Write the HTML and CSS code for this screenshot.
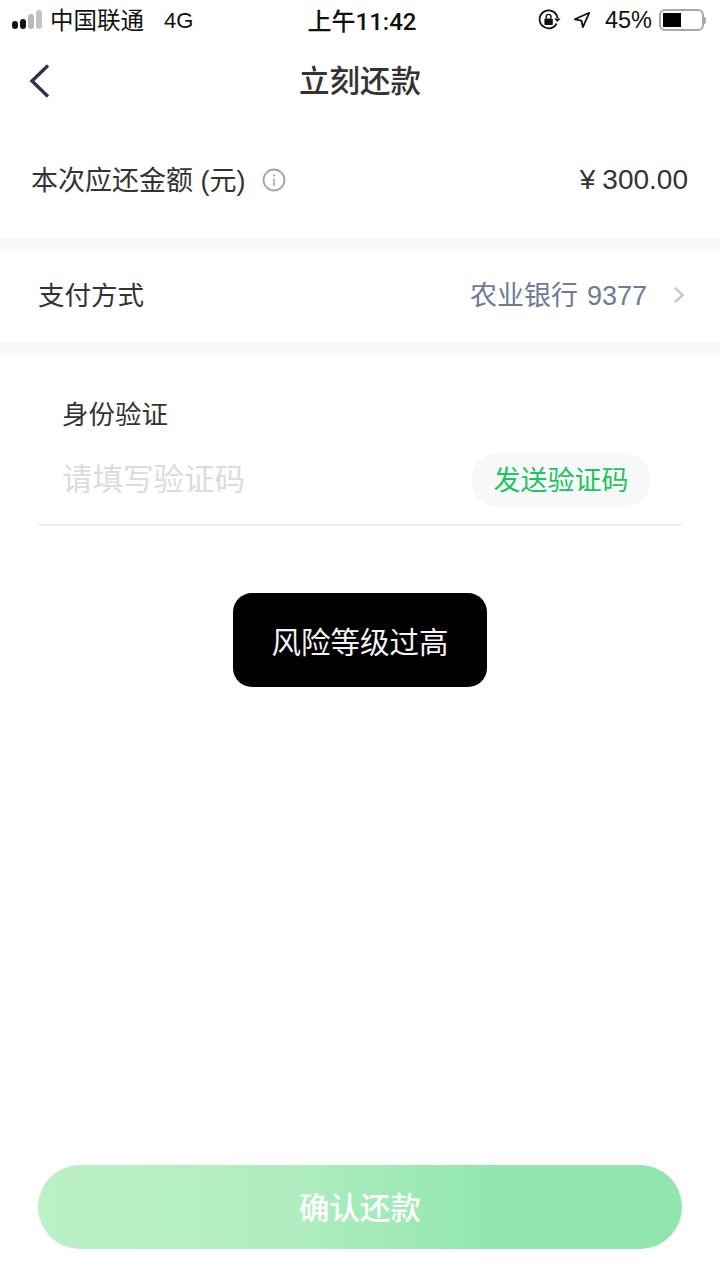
FILE: index.html
```html
<!DOCTYPE html>
<html lang="zh-CN">
<head>
    <meta charset="UTF-8">
    <meta name="viewport" content="width=device-width, initial-scale=1.0">
    <title>立刻还款</title>
    <link rel="stylesheet" href="styles.css">
</head>
<body>

    <div class="status-bar">
        <div class="status-left">
            <div class="signal">
                <span class="dot on"></span>
                <span class="dot on"></span>
                <span class="dot mid"></span>
                <span class="dot off"></span>
            </div>
            <span class="carrier">中国联通</span>
            <span class="network">4G</span>
        </div>
        <div class="status-time">上午11:42</div>
        <div class="status-right">
            <svg class="ico-lock" width="24" height="24" viewBox="0 0 24 24">
                <path d="M19.6 15.5A9 9 0 1 1 20.5 10" fill="none" stroke="#111" stroke-width="1.8"/>
                <path d="M17.2 10.5h6.4l-3.2 3.6z" fill="#111"/>
                <rect x="7.4" y="10.4" width="8.4" height="6.6" rx="1" fill="#111"/>
                <path d="M9.2 10.6V8.8a2.4 2.4 0 0 1 4.8 0v1.8" fill="none" stroke="#111" stroke-width="1.4"/>
            </svg>
            <svg class="ico-loc" width="18" height="18" viewBox="0 0 20 20">
                <path d="M18 2 2 9.2l7.4 1.4 1.6 7.4z" fill="none" stroke="#111" stroke-width="2" stroke-linejoin="round"/>
            </svg>
            <span class="battery-text">45%</span>
            <div class="battery">
                <div class="battery-level"></div>
            </div>
            <div class="battery-cap"></div>
        </div>
    </div>

    <header class="nav">
        <svg class="back" width="24" height="36" viewBox="0 0 24 36">
            <path d="M20 2.500 4 18l16 15.500" fill="none" stroke="#2f3542" stroke-width="3.400"/>
        </svg>
        <h1>立刻还款</h1>
    </header>

    <section class="amount-row">
        <div class="amount-label">
            <span>本次应还金额 (元)</span>
            <svg width="24" height="24" viewBox="0 0 24 24">
                <circle cx="12" cy="12" r="10.500" fill="none" stroke="#a3a3a3" stroke-width="1.800"/>
                <circle cx="12" cy="7.500" r="1.100" fill="#a3a3a3"/>
                <rect x="11.200" y="10.400" width="1.600" height="7.600" fill="#a3a3a3"/>
            </svg>
        </div>
        <div class="amount-value"><span class="yen">¥</span>300.00</div>
    </section>

    <div class="divider"></div>

    <section class="pay-row">
        <span class="pay-label">支付方式</span>
        <div class="pay-value">
            <span>农业银行 9377</span>
            <svg width="14" height="18" viewBox="0 0 14 20">
                <path d="M2.500 2 11 10l-8.500 8" fill="none" stroke="#c6c8cb" stroke-width="2.800"/>
            </svg>
        </div>
    </section>

    <div class="divider"></div>

    <section class="verify">
        <div class="verify-title">身份验证</div>
        <div class="verify-input">
            <span class="placeholder">请填写验证码</span>
            <button class="send-code">发送验证码</button>
        </div>
    </section>

    <button class="confirm">确认还款</button>

    <div class="toast">风险等级过高</div>

</body>
</html>
```

FILE: styles.css
```css
:root
{
    --text-color: #333333;
    --gap-color: #f9f9f9;
    --green: #1fc45f;
}

*
{
    padding: 0;
    margin: 0;
    box-sizing: border-box;
    font-family: "Liberation Sans", "Noto Sans CJK SC", sans-serif;
}

body
{
    position: relative;
    display: flex;
    flex-flow: column nowrap;
    width: 720px;
    height: 1280px;
    overflow: hidden;
    background-color: #ffffff;
    color: var(--text-color);
}

.status-bar
{
    display: grid;
    grid-template-columns: 1fr auto 1fr;
    align-items: center;
    height: 40px;
    padding: 0 14px 0 12px;
    color: #111111;
}

.status-left
{
    display: flex;
    align-items: center;
    font-size: 23.500px;
}

.signal
{
    display: flex;
    align-items: flex-end;
    gap: 2px;
    margin-right: 8px;
    margin-bottom: 2px;
}

.dot
{
    width: 6px;
    border-radius: 3px;
}

.dot:nth-child(1) { height: 8px; }
.dot:nth-child(2) { height: 10px; }
.dot:nth-child(3) { height: 15px; }
.dot:nth-child(4) { height: 19px; }

.dot.on { background-color: #111111; }
.dot.mid { background-color: #b9b9b9; }
.dot.off { background-color: #c4c4c4; }

.carrier
{
    padding-bottom: 2px;
}

.network
{
    margin-left: 20px;
    padding-top: 2px;
    font-size: 22px;
}

.status-time
{
    margin-left: 6px;
    padding-bottom: 2px;
    font-family: Roboto, "Noto Sans CJK SC", sans-serif;
    font-size: 24px;
    font-weight: 500;
}

.status-right
{
    display: flex;
    align-items: center;
    justify-content: flex-end;
}

.ico-loc
{
    margin-left: 12px;
}

.battery-text
{
    margin-left: 14px;
    font-size: 23.500px;
}

.battery
{
    width: 45px;
    height: 22px;
    margin-left: 7px;
    padding: 2px;
    border: 2px solid #a8a8a8;
    border-radius: 6px;
}

.battery-level
{
    width: 18px;
    height: 100%;
    background-color: #000000;
}

.battery-cap
{
    width: 2px;
    height: 7px;
    border-radius: 0 2px 2px 0;
    background-color: #a8a8a8;
}

.nav
{
    position: relative;
    display: flex;
    justify-content: center;
    align-items: center;
    height: 82px;
}

.nav h1
{
    padding-bottom: 4px;
    font-size: 30.500px;
    font-weight: 500;
}

.back
{
    position: absolute;
    left: 28px;
    top: 23px;
}

.amount-row
{
    display: flex;
    justify-content: space-between;
    align-items: center;
    height: 116px;
    padding: 0 32px 0 31px;
}

.amount-label
{
    display: flex;
    align-items: center;
    gap: 17px;
    font-size: 27px;
}

.amount-label span
{
    padding-bottom: 4px;
}

.amount-value
{
    font-size: 28px;
}

.yen
{
    margin-right: 7px;
}

.divider
{
    height: 14px;
    background-color: var(--gap-color);
}

.pay-row
{
    display: flex;
    justify-content: space-between;
    align-items: center;
    height: 90px;
    padding: 0 34px 7px 39px;
    font-size: 27px;
}

.pay-label
{
    margin-left: -1px;
    font-size: 26.500px;
}

.pay-value
{
    display: flex;
    align-items: center;
    gap: 25px;
    color: #6e7a96;
    word-spacing: 1.500px;
}

.pay-value svg
{
    margin-top: 3px;
}

.verify
{
    height: 170px;
    margin: 0 38px;
    padding: 41px 31px 0 24px;
    border-bottom: 2px solid #ececec;
}

.verify-title
{
    font-size: 26.500px;
    line-height: 36px;
}

.verify-input
{
    display: flex;
    justify-content: space-between;
    align-items: center;
    margin-top: 20px;
}

.placeholder
{
    padding-bottom: 6px;
    font-size: 30.500px;
    color: #dcdcdc;
}

.send-code
{
    width: 180px;
    height: 54px;
    padding-bottom: 4px;
    border: none;
    border-radius: 27px;
    background-color: #f6f8f9;
    color: var(--green);
    font-size: 27px;
}

.confirm
{
    height: 84px;
    margin: auto 38px 31px;
    padding-bottom: 3px;
    border: none;
    border-radius: 42px;
    background-image: linear-gradient(90deg, #bcf0c6 0%, #b0edbf 40%, #90e6ae 72%, #90e6ae 100%);
    color: #ffffff;
    font-size: 30.500px;
    font-weight: 500;
}

/* sits over the page */
.toast
{
    position: absolute;
    left: 233px;
    top: 593px;
    display: flex;
    justify-content: center;
    align-items: center;
    width: 254px;
    height: 94px;
    border-radius: 19px;
    background-color: #000000;
    color: #f4f4f4;
    font-size: 29.500px;
}
```
